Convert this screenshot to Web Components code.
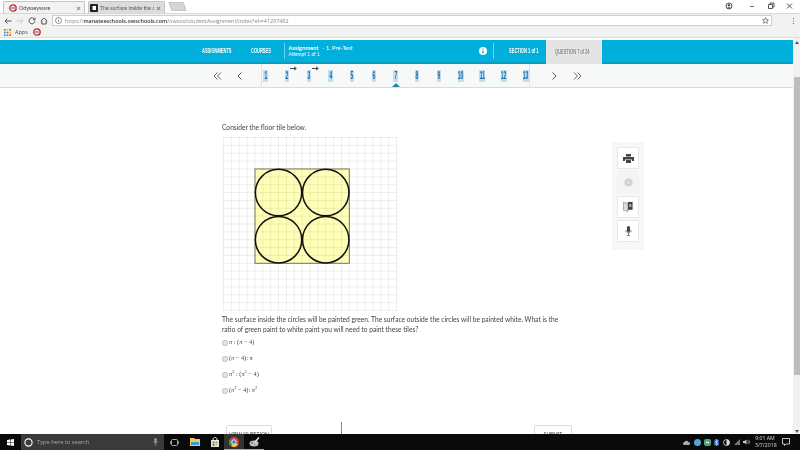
<!DOCTYPE html>
<html>
<head>
<meta charset="utf-8">
<title>Odysseyware</title>
<style>
html, body { margin: 0; height: 100%; overflow: hidden; background: #fff; }
body { display: flex; flex-direction: column; width: 800px; height: 450px; font-family: "Lato", "Liberation Sans", sans-serif; filter: blur(0.3px); }
</style>
</head>
<body>
<browser-frame></browser-frame>
<app-page>
  <app-header></app-header>
  <question-nav></question-nav>
  <question-view></question-view>
</app-page>
<task-bar></task-bar>

<script>
const BLUE = "#00afdb";

function shadow(el, html) {
    el.attachShadow({ mode: "open" }).innerHTML = html;
}

class BrowserFrame extends HTMLElement {
    connectedCallback() {
        shadow(this, `
<style>
:host { display: block; height: 38px; flex: none; font-family: "Open Sans", "Liberation Sans", sans-serif; color: #444; border-bottom: 1px solid #dcdcdc; box-sizing: border-box; }
.tabs { height: 13px; display: flex; align-items: flex-end; background: #fff; padding-left: 3px; gap: 3px; }
.tab { height: 12px; width: 82px; box-sizing: border-box; background: #f2f2f2; border: 1px solid #c4c4c4; border-bottom: 0; border-radius: 2px 2px 0 0; display: flex; align-items: center; gap: 2px; padding: 0 3px 0 5px; font-family: "Lato", sans-serif; font-size: 5.300px; white-space: nowrap; overflow: hidden; }
.tab.off { background: #dcdcdc; width: 77px; color: #555; padding-left: 1px; }
.tab span { flex: 1; overflow: hidden; }
.tab b { font-weight: 400; font-size: 8px; line-height: 8px; color: #555; }
.new { width: 13px; height: 7px; background: #d5d5d5; border: 1px solid #c4c4c4; transform: skewX(20deg); margin: 0 0 2px 2px; }
.win { margin-left: auto; display: flex; gap: 8px; align-items: center; height: 12px; padding-right: 4px; align-self: flex-start; }
.win svg { display: block; }
.tools { height: 14px; background: #f2f2f2; display: flex; align-items: center; padding-left: 4px; gap: 4px; border-top: 1px solid #d8d8d8; box-sizing: border-box; }
.omni { width: 720px; height: 11px; box-sizing: border-box; background: #fff; border: 1px solid #cfcfcf; display: flex; align-items: center; font-size: 5.400px; color: #888; gap: 3px; padding: 0 2px 0 2px; white-space: nowrap; }
.omni strong { font-weight: 600; color: #333; }
.omni .url { flex: 1; }
.marks { height: 10px; background: #f2f2f2; display: flex; align-items: center; padding-left: 4px; gap: 3px; font-size: 5.500px; }
</style>
<div class="tabs">
  <div class="tab">
    <svg width="8" height="8" viewBox="0 0 8 8"><circle cx="4" cy="4" r="3.200" fill="none" stroke="#c8232c" stroke-width="1.300"/><path d="M2 4h4" stroke="#555"/></svg>
    <span>Odysseyware</span><b>×</b>
  </div>
  <div class="tab off">
    <svg width="8" height="8" viewBox="0 0 8 8"><rect width="8" height="8" rx="1" fill="#222"/><rect x="2.500" y="2" width="3.500" height="4" fill="#fff"/></svg>
    <span>The surface inside the c</span><b>×</b>
  </div>
  <div class="new"></div>
  <div class="win">
    <svg width="8" height="8" viewBox="0 0 8 8"><circle cx="4" cy="4" r="3" fill="none" stroke="#555"/><circle cx="4" cy="3.200" r="1.200" fill="#555"/><path d="M2 6.400c.6-1.400 3.400-1.400 4 0" fill="#555"/></svg>
    <svg width="11" height="8" viewBox="0 0 11 8" style="margin-left:6px"><path d="M3 4.500h4" stroke="#666"/></svg>
    <svg width="11" height="8" viewBox="0 0 11 8"><path d="M2.500 2.500h4v4h-4zM4 2.500V1h4v4H6.500" fill="none" stroke="#555"/></svg>
    <svg width="11" height="8" viewBox="0 0 11 8"><path d="M2 1.500l5 5M7 1.500l-5 5" stroke="#555"/></svg>
  </div>
</div>
<div class="tools">
  <svg width="8" height="8" viewBox="0 0 8 8"><path d="M7.500 4H1M3.500 1.500L1 4l2.500 2.500" fill="none" stroke="#555"/></svg>
  <svg width="8" height="8" viewBox="0 0 8 8"><path d="M.5 4H7M4.500 1.500L7 4 4.500 6.500" fill="none" stroke="#ccc"/></svg>
  <svg width="8" height="8" viewBox="0 0 8 8"><path d="M6.700 2.500A3 3 0 1 0 7 4.200M7 .8v2H5" fill="none" stroke="#555"/></svg>
  <svg width="8" height="8" viewBox="0 0 8 8"><path d="M.7 4L4 1l3.300 3M1.800 3.500V7h4.400V3.500" fill="none" stroke="#555"/></svg>
  <div class="omni">
    <svg width="7" height="7" viewBox="0 0 7 7"><circle cx="3.500" cy="3.500" r="3" fill="none" stroke="#777" stroke-width=".8"/><path d="M3.500 3v2M3.500 1.700v.8" stroke="#777" stroke-width=".8"/></svg>
    <span class="url">https://<strong>manateeschools.owschools.com</strong>/owsoo/studentAssignment/index?eh=41297482</span>
    <svg width="7" height="7" viewBox="0 0 8 8"><path d="M4 .7l1 2.300 2.400.2-1.800 1.600.6 2.400L4 6 1.800 7.200l.6-2.400L.6 3.200 3 3z" fill="none" stroke="#555" stroke-width=".8"/></svg>
  </div>
  <svg width="3" height="8" viewBox="0 0 3 8" style="margin-left:16px"><path d="M1.500 1v1M1.500 3.500v1M1.500 6v1" stroke="#666"/></svg>
</div>
<div class="marks">
  <svg width="7" height="7" viewBox="0 0 7 7"><g>
    <rect width="1.600" height="1.600" fill="#d8452e"/><rect x="2.700" width="1.600" height="1.600" fill="#f0b400"/><rect x="5.400" width="1.600" height="1.600" fill="#3a8f3f"/>
    <rect y="2.700" width="1.600" height="1.600" fill="#3a7be0"/><rect x="2.700" y="2.700" width="1.600" height="1.600" fill="#d8452e"/><rect x="5.400" y="2.700" width="1.600" height="1.600" fill="#f0b400"/>
    <rect y="5.400" width="1.600" height="1.600" fill="#3a8f3f"/><rect x="2.700" y="5.400" width="1.600" height="1.600" fill="#3a7be0"/><rect x="5.400" y="5.400" width="1.600" height="1.600" fill="#d8452e"/>
  </g></svg>
  <span style="margin-left:1px">Apps</span>
  <svg width="8" height="8" viewBox="0 0 8 8" style="margin-left:2px"><circle cx="4" cy="4" r="3.200" fill="none" stroke="#c8232c" stroke-width="1.300"/><path d="M2 4h4" stroke="#555"/></svg>
</div>`);
    }
}

class AppPage extends HTMLElement {
    connectedCallback() {
        shadow(this, `
<style>
:host { display: grid; grid-template-columns: 1fr 7px; flex: 1; min-height: 0; overflow: hidden; }
.content { display: flex; flex-direction: column; min-height: 0; overflow: hidden; padding-top: 2px; background: #fff; }
.bar { background: #f1f1f1; display: flex; flex-direction: column; align-items: center; padding: 3px 0 1px; }
.arrow { width: 0; height: 0; border-left: 2px solid transparent; border-right: 2px solid transparent; }
.up { border-bottom: 3px solid #555; }
.down { border-top: 3px solid #555; }
.track { flex: 1; width: 6px; margin: 33px 0 55px; background: #bdbdbd; }
</style>
<div class="content"><slot></slot></div>
<div class="bar"><div class="arrow up"></div><div class="track"></div><div class="arrow down"></div></div>`);
    }
}

class SquishText extends HTMLElement {
    // the app uses a condensed face we don't have, so narrow a real font instead
    connectedCallback() {
        const w = this.getAttribute("w");
        shadow(this, `
<style>
:host { display: block; width: ${w}px; flex: none; white-space: nowrap; line-height: 1; }
span { display: inline-block; transform: scaleX(${this.getAttribute("s") || 0.62}); transform-origin: 0 50%; }
</style>
<span><slot></slot></span>`);
    }
}

class AppHeader extends HTMLElement {
    connectedCallback() {
        shadow(this, `
<style>
:host { display: flex; flex: none; height: 24px; box-sizing: border-box; background: ${BLUE}; border-bottom: 2px solid #0a9dc2; padding-left: 202px; align-items: center; color: #fff; font-family: "Liberation Sans", sans-serif; font-size: 6.500px; }
.link { text-decoration: underline; font-weight: 700; }
.courses { margin-left: 20px; }
.rule { width: 1px; height: 16px; background: #6fd3ea; flex: none; }
.assignment { margin-left: 4px; width: 190px; font-family: "Lato", sans-serif; font-size: 5.800px; line-height: 7px; white-space: nowrap; flex: none; }
.assignment b { font-weight: 700; margin-right: 2px; }
.assignment small { display: block; font-size: 4.900px; }
.info { margin: 0 6px 0 0; flex: none; }
.section { margin-left: 15px; margin-right: 9px; font-weight: 700; }
.question { align-self: stretch; margin-bottom: -2px; width: 56px; background: #e4e4e4; color: #666; display: flex; align-items: center; padding-left: 9px; box-sizing: border-box; }
</style>
<squish-text class="link" w="29">ASSIGNMENTS</squish-text>
<squish-text class="link courses" w="19.500">COURSES</squish-text>
<div class="rule" style="margin-left:13px"></div>
<div class="assignment"><b>Assignment</b> - 1. Pre-Test<small>Attempt 1 of 1</small></div>
<svg class="info" width="8" height="8" viewBox="0 0 8 8"><circle cx="4" cy="4" r="4" fill="#fff"/><path d="M4 3.400v3M4 1.500v1" stroke="${BLUE}" stroke-width="1.300"/></svg>
<div class="rule"></div>
<squish-text class="section" w="28">SECTION 1 of 1</squish-text>
<div class="question"><squish-text w="36">QUESTION 7 of 24</squish-text></div>`);
    }
}

class NavNumber extends HTMLElement {
    connectedCallback() {
        const wide = this.textContent.trim().length > 1;
        shadow(this, `
<style>
:host { display: flex; position: relative; justify-content: center; align-items: center; width: 21.700px; height: 23px; flex: none; }
.num { background: #c4dcef; color: #1470b0; font-family: "Liberation Sans", sans-serif; font-size: 10px; line-height: 12px; height: 12px; width: ${wide ? 6 : 4.5}px; display: flex; justify-content: center; overflow: hidden; font-weight: 700; }
.num span { display: block; transform: scaleX(.5); }
.mark { position: absolute; left: 14px; top: 2px; }
.current { position: absolute; left: 6.850px; bottom: 0; width: 0; height: 0; border-left: 4px solid transparent; border-right: 4px solid transparent; border-bottom: 4px solid #1a8aa8; }
</style>
<div class="num"><span><slot></slot></span></div>
${this.hasAttribute("marked") ? '<svg class="mark" width="7" height="5" viewBox="0 0 7 5"><path d="M0 2.500h6M4 .8l2.300 1.700L4 4.200" fill="none" stroke="#444"/></svg>' : ""}
${this.hasAttribute("current") ? '<div class="current"></div>' : ""}`);
    }
}

class QuestionNav extends HTMLElement {
    connectedCallback() {
        let nums = "";
        for (let i = 1; i <= 13; i++) {
            let attrs = (i == 2 || i == 3) ? " marked" : (i == 7 ? " current" : "");
            nums += `<nav-number${attrs}>${i}</nav-number>`;
        }
        shadow(this, `
<style>
:host { display: flex; flex: none; height: 24px; box-sizing: border-box; background: #f7f8f8; border-bottom: 1px solid #dcdcdc; padding-left: 213px; align-items: center; }
svg { display: block; flex: none; }
.nums { display: flex; box-sizing: border-box; border-left: 1px solid #e2e2e2; border-right: 1px solid #e2e2e2; margin: 0 22px 0 19px; height: 23px; width: 269px; justify-content: center; }
</style>
<svg width="9" height="8" viewBox="0 0 9 8"><path d="M4.500 .5L1 4l3.500 3.500M8 .5L4.500 4 8 7.500" fill="none" stroke="#666"/></svg>
<svg width="5" height="8" viewBox="0 0 5 8" style="margin-left:15px"><path d="M4.500 .5L1 4l3.500 3.500" fill="none" stroke="#555"/></svg>
<div class="nums">${nums}</div>
<svg width="5" height="8" viewBox="0 0 5 8"><path d="M.5 .5L4 4 .5 7.500" fill="none" stroke="#555"/></svg>
<svg width="9" height="8" viewBox="0 0 9 8" style="margin-left:16px"><path d="M1 .5L4.500 4 1 7.500M4.500 .5L8 4 4.500 7.500" fill="none" stroke="#666"/></svg>`);
    }
}

class TileFigure extends HTMLElement {
    connectedCallback() {
        let lines = "";
        const step = 173 / 22;
        for (let i = 0; i <= 22; i++) {
            let p = (i * step + 0.5).toFixed(2);
            lines += `<path d="M${p} 0V173.500M0 ${p}H173.500"/>`;
        }
        const o = 4 * step + 0.5, s = 12 * step;
        const r = s / 4 - 0.4;
        let circles = "";
        for (const [cx, cy] of [[1, 1], [3, 1], [1, 3], [3, 3]]) {
            circles += `<circle cx="${o + cx * s / 4}" cy="${o + cy * s / 4}" r="${r}"/>`;
        }
        shadow(this, `
<style>
:host { display: block; width: 174px; height: 174px; margin-left: 1px; }
svg { display: block; }
</style>
<svg width="174" height="174" viewBox="0 0 174 174">
  <rect x="${o}" y="${o}" width="${s}" height="${s}" fill="#ffffb8"/>
  <g stroke="#000" stroke-opacity=".065" stroke-width="1" fill="none">${lines}</g>
  <rect x="${o}" y="${o}" width="${s}" height="${s}" fill="none" stroke="#77775a" stroke-width="1"/>
  <g stroke="#111" stroke-width="1.500" fill="none">${circles}</g>
</svg>`);
    }
}

class AnswerOption extends HTMLElement {
    connectedCallback() {
        shadow(this, `
<style>
:host { display: flex; align-items: center; gap: 1.500px; height: 16px; font-family: "Liberation Serif", serif; font-size: 6.300px; color: #444; }
.radio { width: 3.500px; height: 3.500px; border-radius: 50%; background: #e6e6e6; border: 1px solid #bbb; flex: none; margin-top: 2px; }
</style>
<div class="radio"></div><span><slot></slot></span>`);
    }
}

class ToolRail extends HTMLElement {
    connectedCallback() {
        shadow(this, `
<style>
:host { display: flex; flex-direction: column; gap: 2.400px; width: 32px; height: 108px; box-sizing: border-box; padding: 5px; background: #f7f7f7; margin-top: 54px; flex: none; }
</style>
<slot></slot>`);
    }
}

class ToolButton extends HTMLElement {
    connectedCallback() {
        shadow(this, `
<style>
:host { display: flex; width: 22px; height: 22px; box-sizing: border-box; background: #fff; border: 1px solid #e8e8e8; border-radius: 1px; align-items: center; justify-content: center; flex: none; }
:host([disabled]) { background: #f4f4f4; border-color: #f2f2f2; }
</style>
<slot></slot>`);
    }
}

class QuestionView extends HTMLElement {
    connectedCallback() {
        shadow(this, `
<style>
:host { display: block; flex: 1; min-height: 0; overflow: hidden; font-family: "Lato", "Liberation Sans", sans-serif; font-size: 6.650px; line-height: 10px; color: #444; }
.row { display: flex; padding-left: 222px; gap: 48px; }
.question { width: 342px; flex: none; padding-top: 34px; }
p { margin: 0; }
.intro { margin-bottom: 5px; }
.text { margin: 3px 0 0; }
i { font-family: "Liberation Serif", serif; }
sup { font-size: 4.500px; line-height: 0; }
.actions { display: flex; align-items: flex-start; margin: 24px -8px 0 4px; height: 30px; }
.btn { height: 20px; margin-top: 3px; box-sizing: border-box; border: 1px solid #ddd; border-radius: 2px; font-size: 5px; text-align: center; padding-top: 5px; line-height: 7px; color: #444; flex: none; }
.view { width: 46px; }
.sep { width: 1px; height: 30px; background: #888; margin-left: 69px; flex: none; }
.mark { margin: 9px 0 0 11px; font-size: 5px; color: #333; }
.submit { width: 38px; margin-left: auto; }
</style>
<div class="row">
  <div class="question">
    <p class="intro">Consider the floor tile below.</p>
    <tile-figure></tile-figure>
    <p class="text">The surface inside the circles will be painted green. The surface outside the circles will be painted white. What is the ratio of green paint to white paint you will need to paint these tiles?</p>
    <answer-option><i>π</i> : (<i>π</i> − 4)</answer-option>
    <answer-option>(<i>π</i> − 4): <i>π</i></answer-option>
    <answer-option><i>π</i><sup>2</sup> : (<i>π</i><sup>2</sup> − 4)</answer-option>
    <answer-option>(<i>π</i><sup>2</sup> − 4): <i>π</i><sup>2</sup></answer-option>
    <div class="actions">
      <div class="btn view">VIEW QUESTION</div>
      <div class="sep"></div>
      <div class="mark">⚑ MARK QUESTION</div>
      <div class="btn submit">SUBMIT</div>
    </div>
  </div>
  <tool-rail>
    <tool-button><svg width="11" height="9" viewBox="0 0 11 9"><path d="M3 0h5v2.500H3zM0 3h11v4H9V5.500H2V7H0zM3 6h5v3H3z" fill="#444"/></svg></tool-button>
    <tool-button disabled><svg width="9" height="9" viewBox="0 0 10 10"><circle cx="5" cy="5" r="4.500" fill="#d0d0d0"/><path d="M3 3.500l4 1-1.500 3z" fill="#e6e6e6"/></svg></tool-button>
    <tool-button><svg width="10" height="11" viewBox="0 0 12 13"><path d="M.5 1.500L6 3v9.500L.5 11z" fill="#ddd" stroke="#777" stroke-width=".7"/><path d="M6 1h5.500v9.500H6z" fill="#444"/><path d="M7.500 7l1.200-3.500L10 7" fill="none" stroke="#fff" stroke-width=".8"/></svg></tool-button>
    <tool-button><svg width="7" height="10" viewBox="0 0 9 13"><rect x="2.500" y="0" width="4" height="8" rx="2" fill="#444"/><path d="M1 5.500c0 4.500 7 4.500 7 0M4.500 9v3M2.500 12.500h4" fill="none" stroke="#555"/></svg></tool-button>
  </tool-rail>
</div>`);
    }
}

class TaskBar extends HTMLElement {
    connectedCallback() {
        shadow(this, `
<style>
:host { display: flex; flex: none; height: 16px; background: #0a0a0a; color: #ddd; font-family: "Open Sans", "Liberation Sans", sans-serif; font-size: 5.700px; align-items: stretch; }
svg { display: block; flex: none; }
.start { width: 21px; display: flex; align-items: center; justify-content: center; }
.search { width: 143px; background: #3a3a3a; display: flex; align-items: center; padding: 0 6px 0 3px; box-sizing: border-box; gap: 4px; color: #aaa; }
.search span { flex: 1; }
.app { width: 20px; display: flex; align-items: center; justify-content: center; box-sizing: border-box; }
.app.open { border-bottom: 1px solid #7db4d8; }
.app.active { background: #333; border-bottom: 1px solid #7db4d8; }
.tray { margin-left: auto; display: flex; align-items: center; padding-right: 10px; }
.clock { text-align: center; line-height: 7.500px; font-size: 5.200px; margin: 0 7px 0 5px; white-space: nowrap; color: #ddd; width: 20px; }
</style>
<div class="start"><svg width="7" height="7" viewBox="0 0 7 7" fill="#fff"><path d="M0 1l3-.5V3.200H0zM3.500 .4L7 0v3.200H3.500zM0 3.800h3v2.700L0 6zM3.500 3.800H7V7l-3.500-.5z"/></svg></div>
<div class="search">
  <svg width="9" height="9" viewBox="0 0 9 9"><circle cx="4.500" cy="4.500" r="3.600" fill="none" stroke="#fff" stroke-width="1.100"/></svg>
  <span>Type here to search</span>
  <svg width="5" height="8" viewBox="0 0 5 8"><rect x="1.300" width="2.400" height="5" rx="1.200" fill="#999"/><path d="M.5 3.500c0 2.500 4 2.500 4 0M2.500 6v2" fill="none" stroke="#999" stroke-width=".7"/></svg>
</div>
<div class="app" style="width:20px"><svg width="9" height="7" viewBox="0 0 9 7"><rect x="1.500" y=".5" width="6" height="6" rx="1" fill="none" stroke="#ccc" stroke-width=".8"/><path d="M.4 2v3M8.600 2v3" stroke="#ccc" stroke-width=".7"/></svg></div>
<div class="app" style="width:22px"><svg width="10" height="8" viewBox="0 0 10 8"><path d="M0 0h4l1 1h5v7H0z" fill="#f3c95a"/><rect x="1" y="4" width="8" height="3" fill="#3e9ad0"/></svg></div>
<div class="app" style="width:18px"><svg width="10" height="10" viewBox="0 0 10 10"><path d="M1 3h8v7H1z" fill="#e8e8e8"/><path d="M3 3c0-3.500 4-3.500 4 0" fill="none" stroke="#e8e8e8"/><rect x="2.500" y="4.500" width="2" height="2" fill="#e0552e"/><rect x="5.500" y="4.500" width="2" height="2" fill="#6fb43e"/><rect x="2.500" y="7" width="2" height="2" fill="#2f90d8"/><rect x="5.500" y="7" width="2" height="2" fill="#f3c22e"/></svg></div>
<div class="app active" style="width:20px"><svg width="10" height="10" viewBox="0 0 10 10"><circle cx="5" cy="5" r="5" fill="#d93f32"/><path d="M5 5L9.300 7.500A5 5 0 0 1 2 9z" fill="#f2c230"/><path d="M5 5L2 9A5 5 0 0 1 .7 2.500z" fill="#3d9e4a"/><circle cx="5" cy="5" r="2.300" fill="#3d7fe0" stroke="#fff" stroke-width=".8"/></svg></div>
<div class="app open" style="width:20px"><svg width="11" height="10" viewBox="0 0 11 10"><ellipse cx="5" cy="6.500" rx="4.500" ry="3" fill="#bcc6cc"/><circle cx="3" cy="6" r="1" fill="#3e7fc0"/><circle cx="5.500" cy="7.500" r="1" fill="#d0a030"/><path d="M6 5L10 .5" stroke="#e8e8e8" stroke-width="1.400"/></svg></div>
<div class="tray">
  <svg width="7" height="5" viewBox="0 0 7 5"><path d="M1.500 5a1.500 1.500 0 0 1 0-3A2.200 2.200 0 0 1 5.500 2a1.500 1.500 0 0 1 0 3z" fill="#aaa"/></svg>
  <svg width="7" height="7" viewBox="0 0 7 7" style="margin-left:4px"><circle cx="3.500" cy="3.500" r="3.500" fill="#4aa8d8"/></svg>
  <svg width="7" height="7" viewBox="0 0 7 7" style="margin-left:3px"><rect width="7" height="7" rx="2" fill="#4fa77a"/><path d="M2 3.500h3" stroke="#fff"/></svg>
  <svg width="5" height="7" viewBox="0 0 5 7" style="margin-left:3px"><rect width="5" height="7" rx="2.500" fill="#2d66b8"/><path d="M1 2l3 3-1.500 1.500v-6L4 2 1 5" fill="none" stroke="#fff" stroke-width=".5"/></svg>
  <svg width="7" height="7" viewBox="0 0 7 7" style="margin-left:4px"><circle cx="3.500" cy="3.500" r="3" fill="none" stroke="#ddd" stroke-width=".8"/><path d="M3.500 .5a3 3 0 0 1 0 6z" fill="#ddd"/></svg>
  <svg width="7" height="6" viewBox="0 0 7 6" style="margin-left:4px"><path d="M0 6L6 0v6z" fill="#777"/></svg>
  <svg width="7" height="6" viewBox="0 0 7 6" style="margin-left:2px"><path d="M0 2h1.500L3.500 .5v5L1.500 4H0z" fill="#ccc"/><path d="M4.500 1.500c1 1 1 2 0 3M5.500 .8c1.400 1.400 1.400 3 0 4.400" fill="none" stroke="#ccc" stroke-width=".6"/></svg>
  <div class="clock">9:01 AM<br>3/7/2018</div>
  <svg width="8" height="8" viewBox="0 0 8 8"><path d="M.5 .5h7v5.500H4L2.500 7.500V6H.5z" fill="none" stroke="#eee" stroke-width=".8"/></svg>
</div>`);
    }
}

customElements.define("browser-frame", BrowserFrame);
customElements.define("app-page", AppPage);
customElements.define("squish-text", SquishText);
customElements.define("app-header", AppHeader);
customElements.define("nav-number", NavNumber);
customElements.define("question-nav", QuestionNav);
customElements.define("tile-figure", TileFigure);
customElements.define("answer-option", AnswerOption);
customElements.define("tool-rail", ToolRail);
customElements.define("tool-button", ToolButton);
customElements.define("question-view", QuestionView);
customElements.define("task-bar", TaskBar);
</script>
</body>
</html>
